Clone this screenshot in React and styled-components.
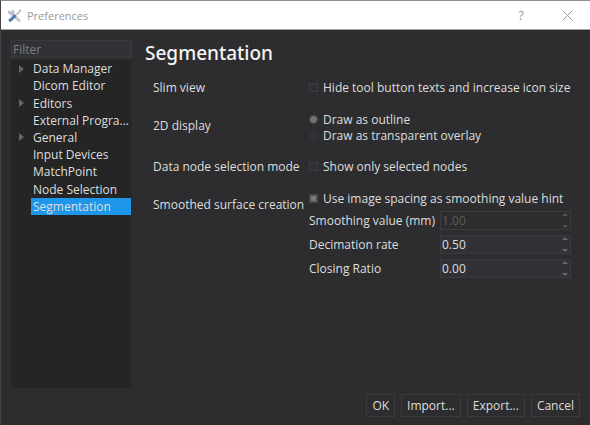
import React, { useState } from "react";
import styled, { createGlobalStyle, css } from "styled-components";

const GlobalStyle = createGlobalStyle`
  *, *::before, *::after { box-sizing: border-box; }
  body { margin: 0; background: #2d2d2f; }
  button, input { font: inherit; color: inherit; }
`;

const Window = styled.div`
  display: flex;
  flex-direction: column;
  min-height: 100vh;
  border-top: 1px solid #909090;
  border-left: 1px solid #434345;
  background: #2d2d2f;
  color: #dedede;
  font: 12px/17px "Open Sans", sans-serif;
`;

const TitleBar = styled.header`
  display: flex;
  align-items: center;
  gap: 5px;
  height: 29px;
  padding: 0 13px 0 7px;
  border-bottom: 1px solid #a0a0a0;
  background: #fff;
  color: #999;
`;

const WindowTitle = styled.span`
  flex: 1;
  font-size: 11px;
`;

const TitleButton = styled.button`
  display: grid;
  place-items: center;
  width: 20px;
  height: 20px;
  margin-left: 21px;
  padding: 0;
  border: 0;
  background: none;
  color: #999;
  font-size: 13px;
`;

const Content = styled.div`
  display: flex;
  flex: 1;
  gap: 13px;
  padding: 10px 10px 8px;
`;

const Sidebar = styled.aside`
  display: flex;
  flex: 0 0 121px;
  flex-direction: column;
  gap: 2px;
`;

const FilterInput = styled.input`
  width: 100%;
  height: 18px;
  padding: 0 1px;
  border: 1px solid #3a3a3d;
  outline: 0;
  background: #323236;
  &::placeholder { color: #7d7d7f; opacity: 1; }
`;

const Tree = styled.nav`
  flex: 1;
  margin-bottom: 29px;
  border-right: 1px solid #2a2a2b;
  background: #252525;
`;

const TreeList = styled.ul`
  display: grid;
  grid-auto-rows: 1fr;
  height: 155px;
  margin: 0;
  padding: 0;
  list-style: none;
`;

const TreeItem = styled.li`
  display: grid;
  grid-template-columns: 20px minmax(0, 1fr);
  align-items: center;
`;

const Expander = styled.svg`
  grid-column: 1;
  justify-self: center;
  width: 5px;
  height: 8px;
  fill: #656565;
`;

const TreeButton = styled.button`
  grid-column: 2;
  height: 100%;
  padding: 0 2px;
  border: 0;
  background: ${(p) => (p.$selected ? "#1e97ea" : "transparent")};
  text-align: left;
  white-space: nowrap;
`;

const Main = styled.main`
  display: flex;
  flex: 1;
  flex-direction: column;
  min-width: 0;
`;

const Heading = styled.h1`
  margin: 0;
  color: #f4f4f4;
  font-family: "Noto Sans", sans-serif;
  font-size: 19px;
  font-weight: 500;
  line-height: 26px;
`;

const Form = styled.div`
  display: grid;
  grid-template-columns: 156px minmax(0, 1fr);
  row-gap: 15px;
  padding: 13px 9px 0 8px;
`;

const Row = styled.div`
  display: grid;
  grid-column: 1 / -1;
  grid-template-columns: subgrid;
  align-items: start;
`;

const GroupLabel = styled.div`
  padding-top: ${(p) => (p.$lowered ? "6px" : "0")};
  white-space: nowrap;
`;

const Options = styled.div`
  display: grid;
`;

const Option = styled.label`
  display: flex;
  align-items: center;
  gap: 5px;
  height: 16px;
  white-space: nowrap;
`;

const toggle = css`
  appearance: none;
  flex: none;
  width: 9px;
  height: 9px;
  margin: 0;
  border: 1px solid #3e3e42;
  background: #303034;
`;

const Checkbox = styled.input.attrs({ type: "checkbox" })`
  ${toggle}
  &:checked {
    border-color: #49494b;
    background: #7a7a7a;
    box-shadow: inset 0 0 0 1px #505052;
  }
`;

const Radio = styled.input.attrs({ type: "radio" })`
  ${toggle}
  border-color: #38383c;
  border-radius: 50%;
  &:checked {
    border-color: #424244;
    background: #737373;
  }
`;

const SpinFields = styled.div`
  display: grid;
  grid-template-columns: 131px minmax(0, 1fr);
  row-gap: 5px;
  align-items: center;
  padding-top: 5px;
`;

const SpinLabel = styled.label`
  white-space: nowrap;
`;

const SpinBox = styled.div`
  display: flex;
  height: 19px;
  border: 1px solid #3b3b3e;
  background: ${(p) => (p.$disabled ? "#2d2d2f" : "#323236")};
`;

const SpinInput = styled.input`
  flex: 1;
  min-width: 0;
  padding: 0 1px;
  border: 0;
  outline: 0;
  background: none;
  &:disabled { color: #5c5c5e; }
`;

const Steppers = styled.div`
  display: flex;
  flex-direction: column;
  justify-content: space-between;
  width: 11px;
`;

const StepButton = styled.button`
  display: flex;
  justify-content: center;
  padding: 1px 0;
  border: 0;
  background: none;
  svg { width: 6px; height: 3px; fill: #69696b; }
  &:disabled svg { fill: #525254; }
`;

const Footer = styled.footer`
  display: flex;
  justify-content: flex-end;
  gap: 6px;
  margin-top: auto;
`;

const ActionButton = styled.button`
  height: 23px;
  padding: 0 5px;
  border: 1px solid #3b3b3e;
  background: #2d2d2f;
`;

function ToolsIcon() {
  return (
    <svg width="14" height="15" viewBox="0 0 15 15" fill="none" aria-hidden="true">
      <path d="M3.5 4.5 12 13" stroke="#9da2a8" strokeWidth="3" strokeLinecap="round" />
      <path d="M3.5 4.5 12 13" stroke="#d3d6da" strokeWidth="2" strokeLinecap="round" />
      <path d="M1 2.5v2l2 1.8 2.5-.3.6-2.3-1.6-2" stroke="#b3b7bc" strokeWidth="1.8" />
      <path d="m8 7.2 3.7-4.1 1.1-1.8 1.3 1-1.7 1.4-3.9 4" stroke="#9a9fa5" strokeWidth="0.8" fill="#d8dadd" />
      <path d="m2.4 12.4 4.3-4" stroke="#4672ab" strokeWidth="3.5" strokeLinecap="round" />
      <path d="m2.3 11.3 3.6-3.2" stroke="#91b2dc" strokeWidth="1" strokeLinecap="round" />
    </svg>
  );
}

const pages = [
  { name: "Data Manager", expandable: true },
  { name: "Dicom Editor" },
  { name: "Editors", expandable: true },
  { name: "External Progra..." },
  { name: "General", expandable: true },
  { name: "Input Devices" },
  { name: "MatchPoint" },
  { name: "Node Selection" },
  { name: "Segmentation" },
];

function SpinField({ id, label, initial, disabled }) {
  const [value, setValue] = useState(initial);
  const step = (delta) => setValue((v) => Math.max(0, Number(v) + delta).toFixed(2));
  return (
    <>
      <SpinLabel htmlFor={id}>{label}</SpinLabel>
      <SpinBox $disabled={disabled}>
        <SpinInput id={id} inputMode="decimal" value={value} disabled={disabled} onChange={(e) => setValue(e.target.value)} />
        <Steppers>
          <StepButton type="button" aria-label={`Increase ${label}`} disabled={disabled} onClick={() => step(0.1)}>
            <svg viewBox="0 0 6 3"><path d="M0 3 3 0l3 3z" /></svg>
          </StepButton>
          <StepButton type="button" aria-label={`Decrease ${label}`} disabled={disabled} onClick={() => step(-0.1)}>
            <svg viewBox="0 0 6 3"><path d="m0 0 3 3 3-3z" /></svg>
          </StepButton>
        </Steppers>
      </SpinBox>
    </>
  );
}

export default function App() {
  const [page, setPage] = useState("Segmentation");
  const [useSpacing, setUseSpacing] = useState(true);
  return (
    <>
      <GlobalStyle />
      <Window>
        <TitleBar>
          <ToolsIcon />
          <WindowTitle>Preferences</WindowTitle>
          <TitleButton type="button" aria-label="Help">?</TitleButton>
          <TitleButton type="button" aria-label="Close">
            <svg width="11" height="11" viewBox="0 0 11 11" fill="none" stroke="#999">
              <path d="m.5.5 10 10m0-10-10 10" />
            </svg>
          </TitleButton>
        </TitleBar>
        <Content>
          <Sidebar>
            <FilterInput placeholder="Filter" aria-label="Filter" />
            <Tree aria-label="Preference pages">
              <TreeList>
                {pages.map(({ name, expandable }) => (
                  <TreeItem key={name}>
                    {expandable && <Expander viewBox="0 0 5 8"><path d="m0 0 5 4-5 4z" /></Expander>}
                    <TreeButton type="button" $selected={page === name} onClick={() => setPage(name)}>{name}</TreeButton>
                  </TreeItem>
                ))}
              </TreeList>
            </Tree>
          </Sidebar>
          <Main>
            <Heading>Segmentation</Heading>
            <Form>
              <Row>
                <GroupLabel>Slim view</GroupLabel>
                <Option><Checkbox />Hide tool button texts and increase icon size</Option>
              </Row>
              <Row role="radiogroup" aria-label="2D display">
                <GroupLabel $lowered>2D display</GroupLabel>
                <Options>
                  <Option><Radio name="display" defaultChecked />Draw as outline</Option>
                  <Option><Radio name="display" />Draw as transparent overlay</Option>
                </Options>
              </Row>
              <Row>
                <GroupLabel>Data node selection mode</GroupLabel>
                <Option><Checkbox />Show only selected nodes</Option>
              </Row>
              <Row>
                <GroupLabel $lowered>Smoothed surface creation</GroupLabel>
                <Options>
                  <Option>
                    <Checkbox checked={useSpacing} onChange={(e) => setUseSpacing(e.target.checked)} />
                    Use image spacing as smoothing value hint
                  </Option>
                  <SpinFields>
                    <SpinField id="smoothing" label="Smoothing value (mm)" initial="1.00" disabled={useSpacing} />
                    <SpinField id="decimation" label="Decimation rate" initial="0.50" />
                    <SpinField id="closing" label="Closing Ratio" initial="0.00" />
                  </SpinFields>
                </Options>
              </Row>
            </Form>
            <Footer>
              <ActionButton type="button">OK</ActionButton>
              <ActionButton type="button">Import...</ActionButton>
              <ActionButton type="button">Export...</ActionButton>
              <ActionButton type="button">Cancel</ActionButton>
            </Footer>
          </Main>
        </Content>
      </Window>
    </>
  );
}
